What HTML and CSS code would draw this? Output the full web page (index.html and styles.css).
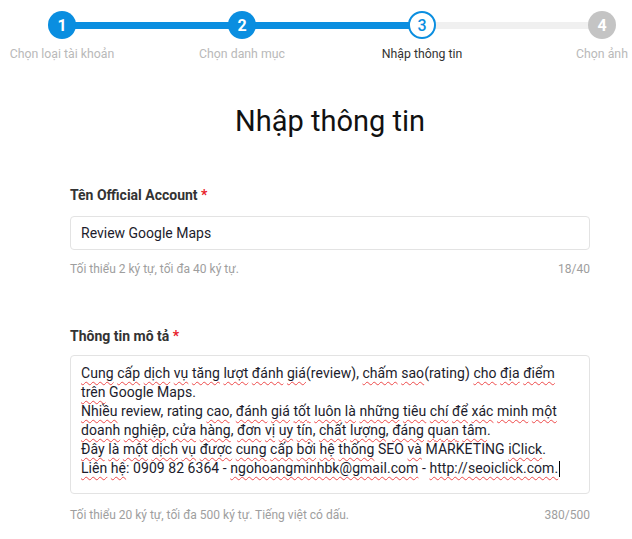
FILE: index.html
```html
<!DOCTYPE html>
<html lang="vi">
<head>
<meta charset="utf-8">
<title>Nhập thông tin</title>
<link rel="stylesheet" href="styles.css">
</head>
<body>
<div class="page">
  <div class="stepper">
    <div class="track">
      <div class="track-done"></div>
    </div>
    <div class="step done">
      <div class="dot">1</div>
      <div class="step-label">Chọn loại tài khoản</div>
    </div>
    <div class="step done">
      <div class="dot">2</div>
      <div class="step-label">Chọn danh mục</div>
    </div>
    <div class="step active">
      <div class="dot">3</div>
      <div class="step-label">Nhập thông tin</div>
    </div>
    <div class="step todo">
      <div class="dot">4</div>
      <div class="step-label">Chọn ảnh</div>
    </div>
  </div>

  <h1 class="title">Nhập thông tin</h1>

  <form class="form">
    <div class="field">
      <div class="label">Tên Official Account <span class="req">*</span></div>
      <div class="input">Review Google Maps</div>
      <div class="help"><span>Tối thiểu 2 ký tự, tối đa 40 ký tự.</span><span>18/40</span></div>
    </div>

    <div class="field field-2">
      <div class="label">Thông tin mô tả <span class="req">*</span></div>
      <div class="textarea"><span class="sp">Cung</span> <span class="sp">cấp</span> <span class="sp">dịch</span> <span class="sp">vụ</span> <span class="sp">tăng</span> <span class="sp">lượt</span> <span class="sp">đánh</span> <span class="sp">giá</span>(review), <span class="sp">chấm</span> <span class="sp">sao</span>(rating) <span class="sp">cho</span> <span class="sp">địa</span> <span class="sp">điểm</span><br><span class="sp">trên</span> Google Maps.<br><span class="sp">Nhiều</span> review, rating <span class="sp">cao</span>, <span class="sp">đánh</span> <span class="sp">giá</span> <span class="sp">tốt</span> <span class="sp">luôn</span> <span class="sp">là</span> <span class="sp">những</span> <span class="sp">tiêu</span> <span class="sp">chí</span> <span class="sp">để</span> <span class="sp">xác</span> <span class="sp">minh</span> <span class="sp">một</span><br><span class="sp">doanh</span> <span class="sp">nghiệp</span>, <span class="sp">cửa</span> <span class="sp">hàng</span>, <span class="sp">đơn</span> <span class="sp">vị</span> <span class="sp">uy</span> <span class="sp">tín</span>, <span class="sp">chất</span> <span class="sp">lượng</span>, <span class="sp">đáng</span> <span class="sp">quan</span> <span class="sp">tâm</span>.<br><span class="sp">Đây</span> <span class="sp">là</span> <span class="sp">một</span> <span class="sp">dịch</span> <span class="sp">vụ</span> <span class="sp">được</span> <span class="sp">cung</span> <span class="sp">cấp</span> <span class="sp">bởi</span> <span class="sp">hệ</span> <span class="sp">thống</span> SEO <span class="sp">và</span> MARKETING <span class="sp">iClick</span>.<br><span class="sp">Liên</span> <span class="sp">hệ</span>: 0909 82 6364 - <span class="sp">ngohoangminhbk@gmail.com</span> - <span class="sp">http://seoiclick.com.</span><span class="caret"></span></div>
      <div class="help"><span>Tối thiểu 20 ký tự, tối đa 500 ký tự. Tiếng việt có dấu.</span><span>380/500</span></div>
    </div>
  </form>
</div>
</body>
</html>
```

FILE: styles.css
```css
html, body {
  margin: 0;
  padding: 0;
  overflow: hidden;
  background: #ffffff;
}

body {
  font-family: Roboto, "Noto Sans", "Liberation Sans", sans-serif;
  color: #222222;
}

.page {
  width: 720px;
  margin-left: -30px;
}

.stepper {
  position: relative;
  display: grid;
  grid-template-columns: repeat(4, 180px);
  padding-top: 11px;
  margin-left: 2px;
}

.track {
  position: absolute;
  top: 22px;
  left: 90px;
  width: 540px;
  height: 7px;
  background: #f0f0f0;
}

.track-done {
  width: 360px;
  height: 100%;
  background: #0a8ee0;
}

.step {
  position: relative;
  display: flex;
  flex-direction: column;
  align-items: center;
}

.dot {
  width: 28px;
  height: 28px;
  box-sizing: border-box;
  border-radius: 50%;
  display: flex;
  align-items: center;
  justify-content: center;
  font-size: 16px;
  font-weight: 700;
  color: #ffffff;
  background: #0a8ee0;
}

.step.active .dot {
  background: #ffffff;
  border: 2px solid #0a8ee0;
  color: #0a8ee0;
  font-weight: 500;
}

.step.todo .dot {
  background: #c4c4c4;
}

.step-label {
  margin-top: 8px;
  font-size: 12.3px;
  line-height: 15px;
  color: #b9b9b9;
  white-space: nowrap;
}

.step.active .step-label {
  color: #333333;
}

.title {
  margin: 41px 0 0;
  text-align: center;
  font-size: 29px;
  font-weight: 400;
  line-height: 36px;
  color: #111111;
}

.form {
  width: 520px;
  margin: 48px auto 0;
}

.label {
  font-size: 14px;
  font-weight: 700;
  line-height: 17px;
  color: #333333;
}

.req {
  color: #e8202a;
}

.input {
  margin-top: 12px;
  height: 34px;
  box-sizing: border-box;
  border: 1px solid #e3e3e3;
  border-radius: 4px;
  padding: 0 10px;
  display: flex;
  align-items: center;
  font-size: 14px;
  color: #1c1c2c;
}

.help {
  display: flex;
  justify-content: space-between;
  margin-top: 12px;
  font-size: 12px;
  line-height: 14px;
  color: #9e9e9e;
}

.field-2 {
  margin-top: 52px;
}

.textarea {
  margin-top: 10px;
  height: 139px;
  box-sizing: border-box;
  border: 1px solid #e3e3e3;
  border-radius: 4px;
  padding: 8px 10px;
  font-size: 14px;
  line-height: 19px;
  letter-spacing: 0.05px;
  color: #1c1c2c;
  white-space: nowrap;
}

.sp {
  text-decoration: underline wavy #ee4a4a;
  text-decoration-thickness: 1px;
  text-underline-offset: 3px;
}

.caret {
  display: inline-block;
  width: 1px;
  height: 16px;
  margin-left: 1px;
  background: #000000;
  vertical-align: -4px;
}

.field-2 .help {
  margin-top: 14px;
}
```
